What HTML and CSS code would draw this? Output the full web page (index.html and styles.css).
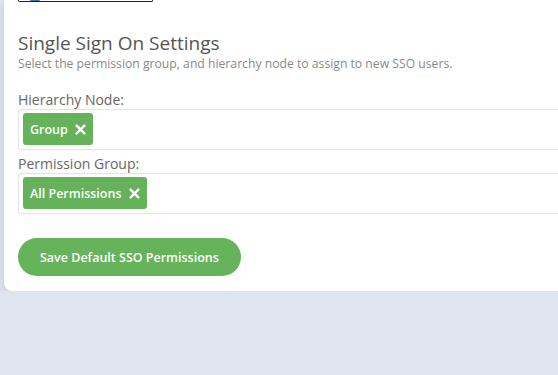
FILE: index.html
```html
<!DOCTYPE html>
<html lang="en">
<head>
  <meta charset="UTF-8"/>
  <meta name="viewport" content="width=device-width,initial-scale=1.0"/>
  <title>SSO Settings</title>
  <link rel="stylesheet" href="styles.css">
</head>
<body>

<div class="card">
  <div class="logo-box"><span class="logo-mark"></span></div>

  <h2>Single Sign On Settings</h2>
  <p class="hint">Select the permission group, and hierarchy node to assign to new SSO users.</p>

  <label class="field-label">Hierarchy Node:</label>
  <div class="tag-input">
    <span class="tag">Group
      <svg class="x" viewBox="0 0 10 10"><path d="M1.5 1.5l7 7M8.5 1.5l-7 7"/></svg>
    </span>
  </div>

  <label class="field-label">Permission Group:</label>
  <div class="tag-input">
    <span class="tag">All Permissions
      <svg class="x" viewBox="0 0 10 10"><path d="M1.5 1.5l7 7M8.5 1.5l-7 7"/></svg>
    </span>
  </div>

  <button class="btn-save">Save Default SSO Permissions</button>
</div>

</body>
</html>
```

FILE: styles.css
```css
/* ========== Base ========== */
* { margin:0; padding:0; box-sizing:border-box }
body { font-family:"Open Sans",Arial,sans-serif; background:#dfe5ee; color:#555; overflow:hidden }

/* ========== Card ========== */
.card {
  margin-left: 4px;
  width: 600px;
  background: #fff;
  border-radius: 0 0 8px 8px;
  box-shadow: 0 3px 8px rgba(60,70,90,0.18);
  padding: 0 14px 15px 14px;
}
.logo-box {
  width: 135px;
  height: 2px;
  border: 1px solid #222;
  border-top: none;
  border-radius: 0 0 4px 4px;
  margin-bottom: 28px;
  position: relative;
}
.logo-mark {
  position: absolute;
  left: 10px; top: -2px;
  width: 12px; height: 3px;
  background: #3a6cc0;
  border-radius: 0 0 4px 4px;
}

h2 {
  font-size: 19px;
  font-weight: 400;
  color: #555;
  line-height: 26px;
}
.hint {
  font-size: 12.2px;
  color: #8a8a8a;
  line-height: 15px;
  margin-bottom: 19px;
}

/* ========== Tag inputs ========== */
.field-label {
  display: block;
  font-size: 14px;
  color: #666;
  line-height: 19px;
}
.tag-input {
  border: 1px solid #e2e4ea;
  border-right: none;
  border-radius: 3px 0 0 3px;
  padding: 3px 4px;
  height: 41px;
  margin-bottom: 4px;
}
.tag {
  display: inline-flex;
  align-items: center;
  gap: 7px;
  height: 32px;
  padding: 0 7px;
  background: #65b25a;
  color: #fff;
  font-size: 12.5px;
  font-weight: 600;
  border-radius: 3px;
}
.tag .x {
  width: 11px; height: 11px;
  stroke: #fff;
  stroke-width: 2.2;
  stroke-linecap: round;
  fill: none;
}

/* ========== Button ========== */
.btn-save {
  margin-top: 20px;
  height: 38px;
  padding: 0 22px;
  background: #66b35b;
  border: none;
  border-radius: 19px;
  color: #fff;
  font-family: "Open Sans",Arial,sans-serif;
  font-size: 12.5px;
  font-weight: 600;
}
```
